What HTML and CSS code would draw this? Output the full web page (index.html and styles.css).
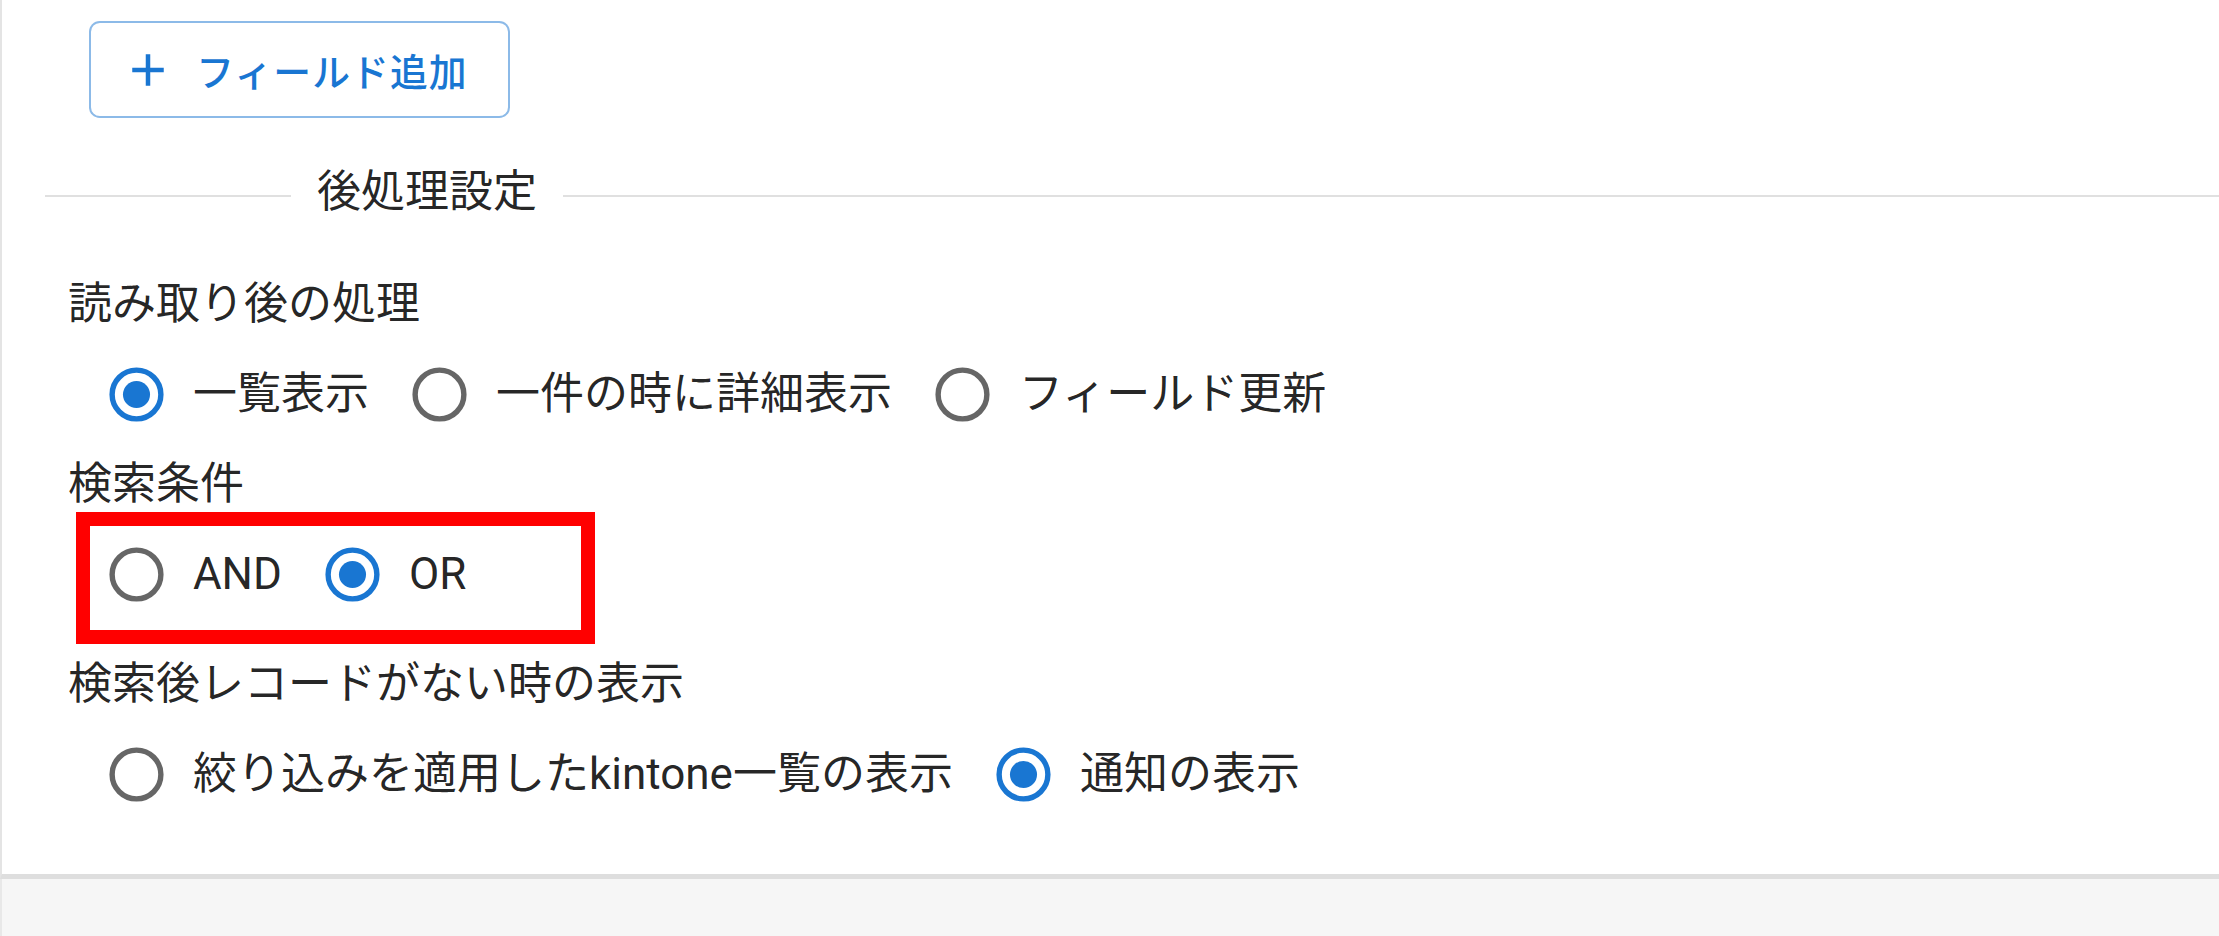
FILE: index.html
```html
<!DOCTYPE html>
<html lang="ja">
<head>
  <meta charset="UTF-8" />
  <meta name="viewport" content="width=device-width, initial-scale=1.0"/>
  <title>後処理設定</title>
  <link rel="stylesheet" href="styles.css">
</head>
<body>
  <div class="panel">
    <button class="add-btn" type="button">
      <span class="add-icon">
        <svg viewBox="0 0 24 24"><path d="M19 13h-6v6h-2v-6H5v-2h6V5h2v6h6v2z"/></svg>
      </span>
      フィールド追加
    </button>

    <div class="divider"><span>後処理設定</span></div>

    <div class="field">
      <div class="field-label">読み取り後の処理</div>
      <div class="radio-group">
        <label class="option checked">
          <span class="radio"><svg viewBox="0 0 24 24"><circle class="ring" cx="12" cy="12" r="9"/><circle class="dot" cx="12" cy="12" r="5"/></svg></span>
          <span class="option-text">一覧表示</span>
        </label>
        <label class="option">
          <span class="radio"><svg viewBox="0 0 24 24"><circle class="ring" cx="12" cy="12" r="9"/></svg></span>
          <span class="option-text">一件の時に詳細表示</span>
        </label>
        <label class="option">
          <span class="radio"><svg viewBox="0 0 24 24"><circle class="ring" cx="12" cy="12" r="9"/></svg></span>
          <span class="option-text">フィールド更新</span>
        </label>
      </div>
    </div>

    <div class="field">
      <div class="field-label">検索条件</div>
      <div class="radio-group highlighted">
        <label class="option">
          <span class="radio"><svg viewBox="0 0 24 24"><circle class="ring" cx="12" cy="12" r="9"/></svg></span>
          <span class="option-text">AND</span>
        </label>
        <label class="option checked">
          <span class="radio"><svg viewBox="0 0 24 24"><circle class="ring" cx="12" cy="12" r="9"/><circle class="dot" cx="12" cy="12" r="5"/></svg></span>
          <span class="option-text">OR</span>
        </label>
      </div>
    </div>

    <div class="field spaced">
      <div class="field-label">検索後レコードがない時の表示</div>
      <div class="radio-group">
        <label class="option">
          <span class="radio"><svg viewBox="0 0 24 24"><circle class="ring" cx="12" cy="12" r="9"/></svg></span>
          <span class="option-text">絞り込みを適用したkintone一覧の表示</span>
        </label>
        <label class="option checked">
          <span class="radio"><svg viewBox="0 0 24 24"><circle class="ring" cx="12" cy="12" r="9"/><circle class="dot" cx="12" cy="12" r="5"/></svg></span>
          <span class="option-text">通知の表示</span>
        </label>
      </div>
    </div>
  </div>
  <div class="footer-area"></div>
</body>
</html>
```

FILE: styles.css
```css
html, body {
  height: 100%;
}

body {
  margin: 0;
  background: #f6f6f6;
  font-family: Roboto, "Noto Sans CJK JP", sans-serif;
  color: rgba(0, 0, 0, 0.87);
  display: flex;
  flex-direction: column;
  overflow: hidden;
}

.panel {
  background: #fff;
  border-left: 2px solid #e4e4e4;
  border-bottom: 5px solid #dedede;
  padding: 21px 0 43px 43px;
}

.add-btn {
  display: inline-flex;
  align-items: center;
  height: 97px;
  margin-left: 44px;
  padding: 0 40.5px;
  border: 2.7px solid rgba(25, 118, 210, 0.5);
  border-radius: 10.8px;
  background: #fff;
  color: #1976d2;
  font-family: Roboto, "Noto Sans CJK JP", sans-serif;
  font-size: 37.8px;
  font-weight: 500;
  letter-spacing: 1.08px;
  cursor: pointer;
}

.add-icon {
  display: flex;
  margin-left: -10.8px;
  margin-right: 21.6px;
}

.add-icon svg {
  width: 54px;
  height: 54px;
  fill: currentColor;
}

.divider {
  display: flex;
  align-items: center;
  margin-top: 41px;
  font-size: 44px;
  line-height: 66px;
}

.divider::before,
.divider::after {
  content: "";
  border-top: 2.5px solid #e0e0e0;
  transform: translateY(4px);
}

.divider::before {
  width: 246px;
}

.divider::after {
  flex: 1;
}

.divider span {
  padding: 0 26px;
}

.field {
  padding-left: 23px;
}

.field:first-of-type {
  margin-top: 46px;
}

.divider + .field {
  margin-top: 46px;
}

.field.spaced {
  margin-top: 20px;
}

.field-label {
  font-size: 44px;
  line-height: 66px;
}

.radio-group {
  display: inline-flex;
  position: relative;
  margin-left: 41px;
}

.highlighted::after {
  content: "";
  position: absolute;
  left: -33px;
  top: -5px;
  width: 519px;
  height: 132px;
  border: 14px solid #ff0000;
  box-sizing: border-box;
}

.option {
  display: inline-flex;
  align-items: center;
  margin-left: -29.7px;
  margin-right: 43.2px;
  cursor: pointer;
}

.radio {
  display: flex;
  padding: 24.5px 24.3px;
}

.radio svg {
  width: 65px;
  height: 65px;
}

.radio .ring {
  fill: none;
  stroke: #666;
  stroke-width: 2;
}

.option.checked .ring {
  stroke: #1976d2;
}

.radio .dot {
  fill: #1976d2;
}

.option-text {
  font-size: 44px;
  line-height: 66px;
  white-space: nowrap;
}

.footer-area {
  flex: 1;
  border-left: 2px solid #e8e8e8;
}
```
